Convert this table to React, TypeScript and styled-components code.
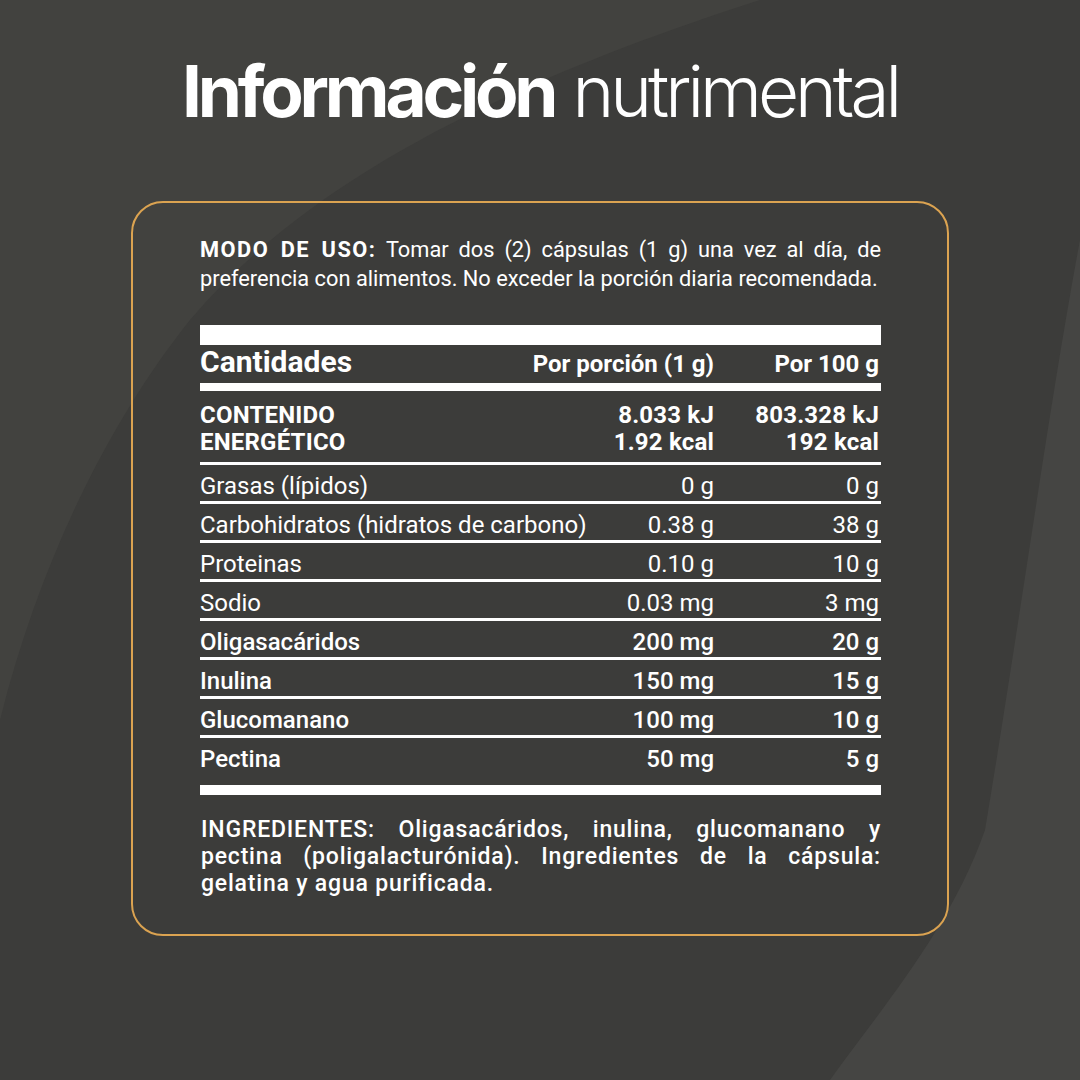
import React from "react";
import styled, { createGlobalStyle } from "styled-components";

const GlobalStyle = createGlobalStyle`
  html, body { margin: 0; padding: 0; background: #3c3c3a; }
  * { box-sizing: border-box; }
`;

const Page = styled.div`
  position: relative;
  width: 1080px;
  height: 1080px;
  overflow: hidden;
  background: #3c3c3a;
  color: #ffffff;
  font-family: Roboto, "Liberation Sans", sans-serif;
`;

const Backdrop = styled.svg`
  position: absolute;
  inset: 0;
  width: 1080px;
  height: 1080px;
  pointer-events: none;
`;

const Content = styled.div`
  position: relative;
  display: flex;
  flex-direction: column;
  align-items: center;
  padding-top: 56px;
`;

const Title = styled.h1`
  margin: 0;
  font-family: Inter, "Liberation Sans", sans-serif;
  font-size: 71px;
  line-height: 71px;
  font-weight: 700;
  letter-spacing: -4.2px;
  white-space: nowrap;
`;

const TitleLight = styled.span`
  font-weight: 300;
  letter-spacing: -4px;
  margin-left: 18px;
`;

const Card = styled.section`
  margin-top: 74px;
  width: 818px;
  border: 2.5px solid #dba351;
  border-radius: 32px;
  padding: 32px 66px 37px 67px;
`;

const Usage = styled.p`
  margin: 0;
  font-size: 21.8px;
  line-height: 29px;
  text-align: justify;
  text-align-last: left;
`;

const Label = styled.strong`
  font-weight: 700;
  letter-spacing: 1.5px;
`;

const Table = styled.div`
  margin-top: 32px;
  display: flex;
  flex-direction: column;
`;

const Bar = styled.div<{ $h: number }>`
  height: ${(p) => p.$h}px;
  background: #ffffff;
`;

const Row = styled.div<{ $line?: boolean }>`
  display: grid;
  grid-template-columns: minmax(0, 1fr) 190px 165px;
  align-items: baseline;
  white-space: nowrap;
  border-top: ${(p) => (p.$line ? "3px solid #ffffff" : "none")};
`;

const HeaderRow = styled(Row)`
  height: 38px;
  padding: 0 2px 4px 0;
  line-height: 34px;
`;

const HeadTitle = styled.span`
  font-size: 30px;
  font-weight: 700;
`;

const HeadCol = styled.span`
  font-size: 24px;
  font-weight: 700;
  text-align: right;
`;

const EnergyRow = styled(Row)`
  padding: 11px 2px 6px 0;
  font-size: 24px;
  line-height: 27px;
  font-weight: 700;
  letter-spacing: 0.2px;
`;

const NutrientRow = styled(Row)<{ $bold?: boolean; $last?: boolean }>`
  padding: 7px 2px ${(p) => (p.$last ? "11px" : "0")} 0;
  height: ${(p) => (p.$last ? 50 : 39)}px;
  font-size: 24px;
  line-height: 29px;
  font-weight: ${(p) => (p.$bold ? 500 : 400)};
`;

const Cell = styled.span<{ $right?: boolean }>`
  text-align: ${(p) => (p.$right ? "right" : "left")};
`;

const Stack = styled.span<{ $right?: boolean }>`
  display: flex;
  flex-direction: column;
  align-items: ${(p) => (p.$right ? "flex-end" : "flex-start")};
`;

const Ingredients = styled.p`
  margin: 21px 0 0 1px;
  font-size: 23px;
  line-height: 27px;
  font-weight: 500;
  letter-spacing: 0.8px;
  text-align: justify;
  text-align-last: left;
`;

const Keep = styled.span`
  white-space: nowrap;
`;

const nutrients: { name: string; a: string; b: string; bold?: boolean }[] = [
  { name: "Grasas (lípidos)", a: "0 g", b: "0 g" },
  { name: "Carbohidratos (hidratos de carbono)", a: "0.38 g", b: "38 g" },
  { name: "Proteinas", a: "0.10 g", b: "10 g" },
  { name: "Sodio", a: "0.03 mg", b: "3 mg" },
  { name: "Oligasacáridos", a: "200 mg", b: "20 g", bold: true },
  { name: "Inulina", a: "150 mg", b: "15 g", bold: true },
  { name: "Glucomanano", a: "100 mg", b: "10 g", bold: true },
  { name: "Pectina", a: "50 mg", b: "5 g", bold: true },
];

export default function App() {
  return (
    <Page>
      <GlobalStyle />
      <Backdrop viewBox="0 0 1080 1080" aria-hidden="true">
        <path
          d="M0 720 C 40 560, 110 420, 190 320 C 300 190, 480 90, 760 0 L 0 0 Z"
          fill="#42423f"
        />
        <path
          d="M1080 240 C 1050 400, 1020 620, 985 830 C 950 930, 880 1010, 830 1080 L 1080 1080 Z"
          fill="#454543"
        />
      </Backdrop>
      <Content>
        <Title>
          Información<TitleLight>nutrimental</TitleLight>
        </Title>
        <Card>
          <Usage>
            <Label>MODO DE USO:</Label> Tomar dos (2) cápsulas (1 g) una vez al día, de
            preferencia con alimentos. No exceder la porción diaria recomendada.
          </Usage>
          <Table>
            <Bar $h={20} />
            <HeaderRow>
              <HeadTitle>Cantidades</HeadTitle>
              <HeadCol>Por porción (1 g)</HeadCol>
              <HeadCol>Por 100 g</HeadCol>
            </HeaderRow>
            <Bar $h={8} />
            <EnergyRow>
              <Stack>
                <span>CONTENIDO</span>
                <span>ENERGÉTICO</span>
              </Stack>
              <Stack $right>
                <span>8.033 kJ</span>
                <span>1.92 kcal</span>
              </Stack>
              <Stack $right>
                <span>803.328 kJ</span>
                <span>192 kcal</span>
              </Stack>
            </EnergyRow>
            {nutrients.map((n, i) => (
              <NutrientRow
                key={n.name}
                $line
                $bold={n.bold}
                $last={i === nutrients.length - 1}
              >
                <Cell>{n.name}</Cell>
                <Cell $right>{n.a}</Cell>
                <Cell $right>{n.b}</Cell>
              </NutrientRow>
            ))}
            <Bar $h={10} />
          </Table>
          <Ingredients>
            INGREDIENTES: Oligasacáridos, inulina, glucomanano y{" "}
            <Keep>pectina (poligalacturónida).</Keep> Ingredientes de la cápsula:{" "}
            <Keep>gelatina y agua purificada.</Keep>
          </Ingredients>
        </Card>
      </Content>
    </Page>
  );
}
